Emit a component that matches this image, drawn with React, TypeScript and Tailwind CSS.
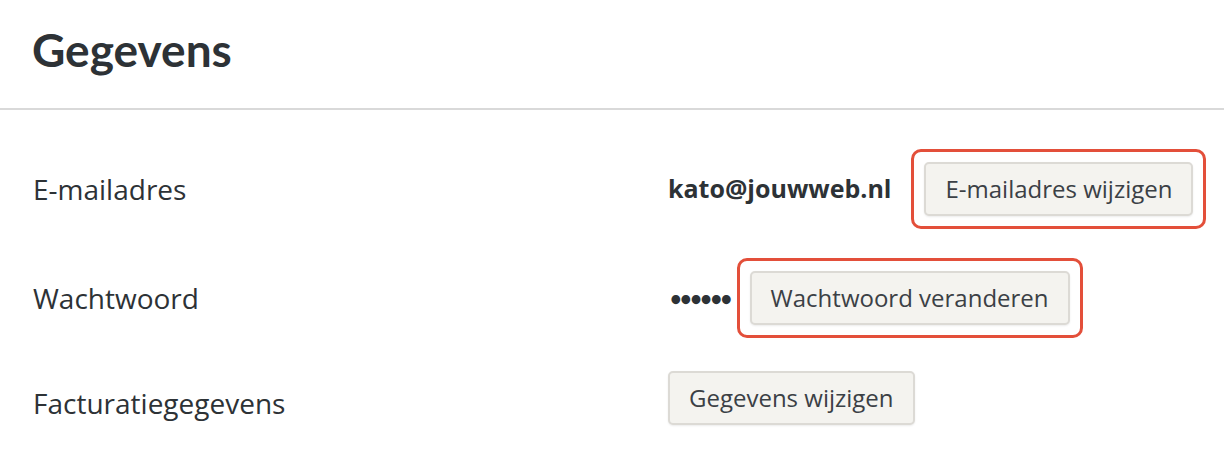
const body = { fontFamily: "'Open Sans', Lato, sans-serif" }
const lato = { fontFamily: "Lato, 'Open Sans', sans-serif" }

function ActionButton({ children }: { children: React.ReactNode }) {
  return (
    <button
      type="button"
      className="h-[54px] rounded-[5px] border-2 border-[#dcdad5] bg-[#f4f3ef] px-[19px] text-[24px] text-[#3b4045] shadow-[0_1px_2px_rgba(0,0,0,0.08)]"
    >
      {children}
    </button>
  )
}

function Highlight({ children }: { children: React.ReactNode }) {
  return (
    <div className="rounded-[10px] border-[3px] border-[#e34f3a] p-[10px]">
      {children}
    </div>
  )
}

export default function App() {
  return (
    <div className="h-[457px] w-[1224px] bg-white text-[#2d3236]" style={body}>
      <header className="h-[110px] border-b-2 border-[#d9d9d9] pl-[32px] pt-[26px]">
        <h1 className="text-[46px] font-bold leading-[48px]" style={lato}>
          Gegevens
        </h1>
      </header>

      <div className="grid grid-cols-[635px_1fr] pl-[33px] pt-[24px]">
        <div className="flex h-[110px] items-center text-[28px]">E-mailadres</div>
        <div className="flex h-[110px] items-center">
          <span className="mr-[20px] text-[25px] font-bold">kato@jouwweb.nl</span>
          <Highlight>
            <ActionButton>E-mailadres wijzigen</ActionButton>
          </Highlight>
        </div>

        <div className="flex h-[108px] items-center text-[28px]">Wachtwoord</div>
        <div className="flex h-[108px] items-center">
          <span className="ml-[2px] mr-[6px] text-[20px] font-bold tracking-[-1.5px]" style={lato}>
            ••••••
          </span>
          <Highlight>
            <ActionButton>Wachtwoord veranderen</ActionButton>
          </Highlight>
        </div>

        <div className="flex h-[92px] items-center pt-[10px] text-[28px]">Facturatiegegevens</div>
        <div className="flex h-[92px] items-center">
          <ActionButton>Gegevens wijzigen</ActionButton>
        </div>
      </div>
    </div>
  )
}
